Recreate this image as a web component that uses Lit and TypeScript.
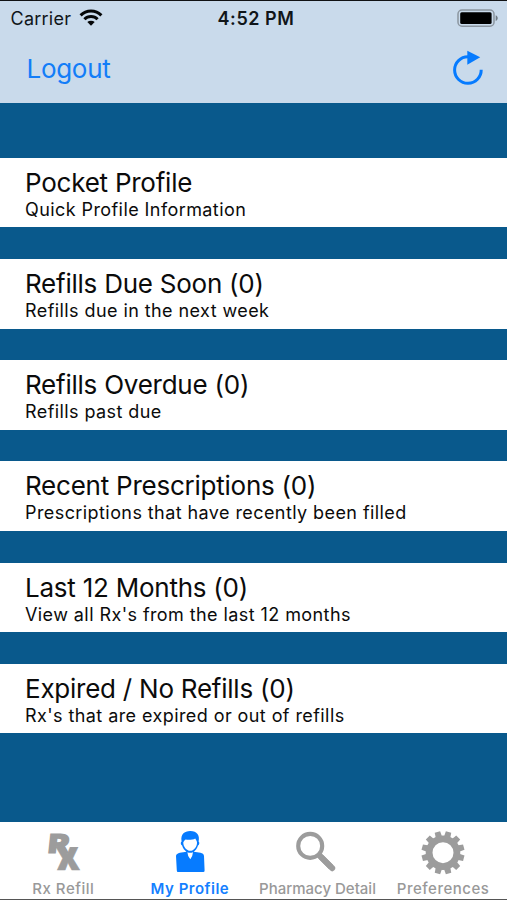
import { LitElement, html, svg, css } from "lit";
import { customElement, property } from "lit/decorators.js";

const wifi = svg`<svg class="wifi" width="24" height="18" viewBox="0 0 24 18">
  <g fill="none" stroke="#050708" stroke-width="3">
    <path d="M1.6 6.4A14.6 14.6 0 0 1 22.4 6.4"/>
    <path d="M5.4 10.2A9.3 9.3 0 0 1 18.6 10.2"/>
  </g>
  <path fill="#050708" d="M8.3 13.1A5.4 5.4 0 0 1 15.7 13.1L12 16.8Z"/>
</svg>`;

const battery = svg`<svg class="battery" width="42" height="18" viewBox="0 0 42 18">
  <rect x="1" y="1" width="36" height="16.2" rx="4" fill="none" stroke="#8b959f" stroke-width="1.5"/>
  <rect x="3.2" y="3.2" width="31.4" height="11.8" rx="1.5" fill="#000"/>
  <path d="M38.7 6.2C41.4 7.2 41.4 11 38.7 12Z" fill="#717a82"/>
</svg>`;

const refresh = svg`<svg class="refresh" width="32" height="36" viewBox="0 0 32 36">
  <path d="M29.2 19.7A13.3 13.3 0 1 1 16 6.7" fill="none" stroke="#067bff" stroke-width="3"/>
  <path d="M15.3 0.8L28.2 7.2L15.3 14.8Z" fill="#067bff"/>
</svg>`;

const rx = svg`<svg class="icon" width="48" height="48" viewBox="0 0 48 48" aria-hidden="true">
  <g class="rx">
    <text transform="translate(8.6 27.3) skewX(-6) scale(1.2 1)" font-size="26" stroke-width="1.2">R</text>
    <text transform="translate(18 44) skewX(4) scale(1.22 1.34)" font-size="31" stroke-width=".5">x</text>
  </g>
</svg>`;

const person = svg`<svg class="icon" width="48" height="48" viewBox="0 0 48 48">
  <path d="M15.6 15.4C14.3 8.3 18.5 5 24.4 5.1C31 5.2 34 9.5 32.6 15.4C33.7 16 33.5 19 32 19.5C31 22.6 29.2 24.7 27.7 25.7C32.2 26.4 37.8 26.2 38 30L38.6 44.5Q38.6 46 37.3 46H12Q10.8 46 10.8 44.5L10 30C10.4 26.2 16.5 26.6 20.5 25.7C18.6 24.4 16.9 22.6 16.1 19.5C14.5 19 14.4 16 15.6 15.4Z" fill="#067bff"/>
  <path d="M17.3 16.2C18.4 15 18.5 14 19.6 13.6C22.5 14 27 14 29.2 12.4C30 13.8 31 15 31 16.4C31.3 20.5 27.7 24.8 24.2 24.8C20.7 24.8 17 20.5 17.3 16.2Z" fill="#fff"/>
  <path d="M21.4 26.2Q24.2 27.4 27 26.2L26.2 30L24.3 33.2L22.2 30Z" fill="#fff"/>
</svg>`;

const search = svg`<svg class="icon" width="48" height="48" viewBox="0 0 48 48" fill="none" stroke="#9c9c9c">
  <circle cx="18.2" cy="19.9" r="12" stroke-width="4.1"/>
  <path d="M27 29L39 41" stroke-width="6"/>
  <path d="M29.4 31.4L40.2 42.2" stroke-width="6" stroke-linecap="round"/>
</svg>`;

const gear = svg`<svg class="icon" width="48" height="48" viewBox="0 0 48 48">
  ${Array.from({ length: 12 }, (_, i) => svg`<path transform="rotate(${15 + i * 30} 24 26.7)" d="M20.7 11.5L21.2 5.2H26.8L27.3 11.5Z" fill="#9c9c9c"/>`)}
  <circle cx="24" cy="26.7" r="13.9" fill="none" stroke="#9c9c9c" stroke-width="6.8"/>
</svg>`;

@customElement("menu-row")
class MenuRow extends LitElement {
  @property() heading = "";
  @property() detail = "";
  static styles = css`
    :host { display: block; height: 69.7px; box-sizing: border-box; background: #fff; padding: 9px 25px 0; color: #0b0b0b; white-space: nowrap; }
    .heading { font-size: 26px; line-height: 32px; letter-spacing: -0.24px; }
    .detail { font-size: 18px; line-height: 22px; letter-spacing: 0.42px; }
  `;
  render() {
    return html`<div class="heading">${this.heading}</div><div class="detail">${this.detail}</div>`;
  }
}

@customElement("app-root")
class AppRoot extends LitElement {
  static styles = css`
    :host { display: flex; flex-direction: column; width: 507px; height: 900px; box-sizing: border-box; overflow: hidden; background: #09598c; border-top: 1.5px solid #101214; font-family: Inter, "Liberation Sans", sans-serif; }
    svg { display: block; }
    header { height: 101.6px; flex: none; background: #c9daeb; }
    .status { display: grid; grid-template-columns: 1fr auto 1fr; align-items: center; height: 34px; color: #101519; font-size: 18px; }
    .carrier { display: flex; align-items: center; gap: 8px; padding-left: 10.5px; letter-spacing: 0.25px; }
    .time { font-weight: 600; letter-spacing: 0.55px; padding-left: 5px; }
    .battery { justify-self: end; margin-right: 8px; }
    .nav { display: flex; justify-content: space-between; align-items: center; height: 66px; padding: 0 23px 0 26.5px; color: #127df8; font-size: 26px; letter-spacing: -0.3px; }
    main { flex: 1; display: flex; flex-direction: column; gap: 31.5px; padding-top: 55.2px; }
    footer { height: 77.8px; flex: none; box-sizing: border-box; display: grid; grid-template-columns: repeat(4, 126.6px); background: #fff; border-bottom: 1px solid #555; }
    .tab { display: flex; flex-direction: column; align-items: center; padding-top: 4px; color: #999; font-size: 15px; font-weight: 500; letter-spacing: 0.5px; line-height: 18px; white-space: nowrap; }
    .tab span { margin-top: 6px; }
    .tab .long { letter-spacing: 0; margin-left: 2px; }
    .active { color: #147fff; font-weight: 600; }
    .icon { overflow: visible; }
    .rx { font-family: Inter, sans-serif; font-weight: 900; fill: #9c9c9c; stroke: #9c9c9c; letter-spacing: 0; }
  `;
  rows = [
    ["Pocket Profile", "Quick Profile Information"],
    ["Refills Due Soon (0)", "Refills due in the next week"],
    ["Refills Overdue (0)", "Refills past due"],
    ["Recent Prescriptions (0)", "Prescriptions that have recently been filled"],
    ["Last 12 Months (0)", "View all Rx's from the last 12 months"],
    ["Expired / No Refills (0)", "Rx's that are expired or out of refills"],
  ];
  render() {
    return html`
      <header>
        <div class="status">
          <div class="carrier"><span>Carrier</span>${wifi}</div>
          <div class="time">4:52 PM</div>
          ${battery}
        </div>
        <div class="nav"><span>Logout</span>${refresh}</div>
      </header>
      <main>${this.rows.map(([h, d]) => html`<menu-row .heading=${h} .detail=${d}></menu-row>`)}</main>
      <footer>
        <div class="tab">${rx}<span>Rx Refill</span></div>
        <div class="tab active">${person}<span>My Profile</span></div>
        <div class="tab">${search}<span class="long">Pharmacy Detail</span></div>
        <div class="tab">${gear}<span>Preferences</span></div>
      </footer>`;
  }
}
